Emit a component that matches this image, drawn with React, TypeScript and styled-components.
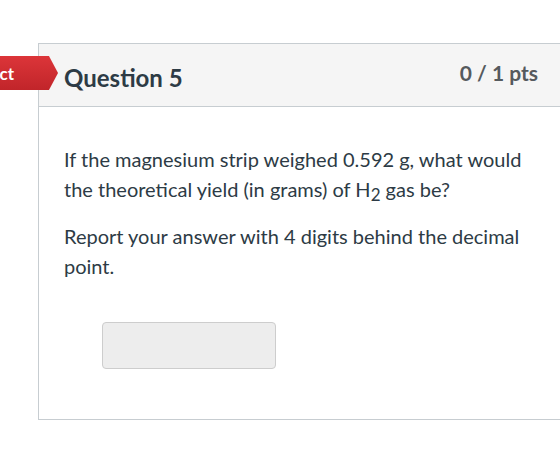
import styled, { createGlobalStyle } from "styled-components";

const GlobalStyle = createGlobalStyle`
  html, body {
    margin: 0;
    padding: 0;
    background: #ffffff;
    overflow: hidden;
  }
  body {
    font-family: Lato, "Open Sans", "Liberation Sans", sans-serif;
    color: #2d3b45;
  }
`;

const Page = styled.div`
  width: 560px;
  height: 458px;
  padding: 43px 0 0 38px;
  box-sizing: border-box;
  overflow: hidden;
`;

const Card = styled.div`
  position: relative;
  width: 560px;
  border: 1px solid #c7cdd1;
  border-right: none;
  background: #fff;
`;

const Header = styled.div`
  display: flex;
  align-items: center;
  justify-content: space-between;
  height: 63px;
  padding: 0 61px 0 25px;
  background: #f5f5f5;
  border-bottom: 1px solid #c7cdd1;
  box-sizing: border-box;
`;

const Title = styled.h2`
  margin: 4px 0 0;
  font-size: 24px;
  font-weight: 700;
  color: #2d3b45;
`;

const Points = styled.div`
  margin-top: -6px;
  font-size: 21px;
  font-weight: 700;
  color: #555a5e;
`;

// "Incorrect" flag hanging off the left edge of the card
const ResultFlag = styled.div`
  position: absolute;
  top: 12px;
  right: calc(100% - 19px);
  height: 34px;
  width: 130px;
  display: flex;
  align-items: center;
  justify-content: flex-end;
  padding-right: 44px;
  box-sizing: border-box;
  background: linear-gradient(#dc3539, #c1252a);
  clip-path: polygon(0 0, calc(100% - 9px) 0, 100% 50%, calc(100% - 9px) 100%, 0 100%);
  color: #fff;
  font-size: 17px;
  font-weight: 700;
`;

const Body = styled.div`
  padding: 37px 25px 50px;
`;

const Text = styled.p`
  margin: 0 0 17px;
  max-width: 470px;
  font-size: 20px;
  line-height: 30px;
  color: #2d3b45;

  sub {
    font-size: 0.85em;
    vertical-align: baseline;
    position: relative;
    top: 4px;
    line-height: 0;
  }
`;

const AnswerBox = styled.input`
  display: block;
  margin: 41px 0 0 38px;
  width: 174px;
  height: 47px;
  box-sizing: border-box;
  background: #ededed;
  border: 1px solid #cdcdcd;
  border-radius: 4px;
`;

export default function App() {
  return (
    <>
      <GlobalStyle />
      <Page>
        <Card>
          <ResultFlag>Incorrect</ResultFlag>
          <Header>
            <Title>Question 5</Title>
            <Points>0 / 1 pts</Points>
          </Header>
          <Body>
            <Text>
              If the magnesium strip weighed 0.592 g, what would the
              theoretical yield (in grams) of H<sub>2</sub> gas be?
            </Text>
            <Text>Report your answer with 4 digits behind the decimal point.</Text>
            <AnswerBox type="text" readOnly />
          </Body>
        </Card>
      </Page>
    </>
  );
}
